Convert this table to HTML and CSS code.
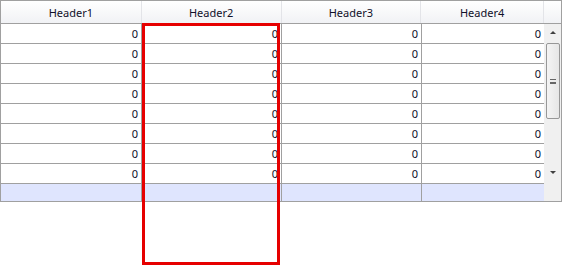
FILE: index.html
```html
<!DOCTYPE html>
<html lang="en">
<head>
    <meta charset="UTF-8">
    <title>DataGridView</title>
    <link rel="stylesheet" href="styles.css">
</head>

<body>
<div class="form">
    <div class="grid">
        <div class="grid-head">
            <div class="hcell c1">Header1</div>
            <div class="hcell c2">Header2</div>
            <div class="hcell c3">Header3</div>
            <div class="hcell c4">Header4</div>
            <div class="hfill"></div>
        </div>
        <div class="grid-body">
            <div class="rows">
                <div class="row"><span class="cell c1">0</span><span class="cell c2">0</span><span class="cell c3">0</span><span class="cell c4">0</span></div>
                <div class="row"><span class="cell c1">0</span><span class="cell c2">0</span><span class="cell c3">0</span><span class="cell c4">0</span></div>
                <div class="row"><span class="cell c1">0</span><span class="cell c2">0</span><span class="cell c3">0</span><span class="cell c4">0</span></div>
                <div class="row"><span class="cell c1">0</span><span class="cell c2">0</span><span class="cell c3">0</span><span class="cell c4">0</span></div>
                <div class="row"><span class="cell c1">0</span><span class="cell c2">0</span><span class="cell c3">0</span><span class="cell c4">0</span></div>
                <div class="row"><span class="cell c1">0</span><span class="cell c2">0</span><span class="cell c3">0</span><span class="cell c4">0</span></div>
                <div class="row"><span class="cell c1">0</span><span class="cell c2">0</span><span class="cell c3">0</span><span class="cell c4">0</span></div>
                <div class="row"><span class="cell c1">0</span><span class="cell c2">0</span><span class="cell c3">0</span><span class="cell c4">0</span></div>
                <div class="row new-row"><span class="cell c1"></span><span class="cell c2"></span><span class="cell c3"></span><span class="cell c4"></span></div>
            </div>
            <div class="vscroll">
                <div class="sb-btn"><span class="arrow up"></span></div>
                <div class="sb-track">
                    <div class="sb-thumb"><span class="grip"></span></div>
                </div>
                <div class="sb-btn"><span class="arrow down"></span></div>
                <div class="sb-corner"></div>
            </div>
        </div>
    </div>
    <!-- marks the selected column -->
    <div class="mark"></div>
</div>
</body>
</html>
```

FILE: styles.css
```css
body{margin: 0; background: #fff; font-family: "Noto Sans", "Liberation Sans", sans-serif; font-size: 11px; color: #0a0a28}

.form{position: relative; width: 562px; height: 267px}
.grid{width: 560px; border: 1px solid #a0a0a0; display: flex; flex-direction: column}

.grid-head{display: flex; height: 22px; border-bottom: 1px solid #a0a0a0; background: linear-gradient(#fff, #f1f2f5)}
.hcell{display: flex; align-items: center; justify-content: center; border-right: 1px solid #e3e4e8; color: #10102a}
.hfill{width: 17px}

.c1{width: 140px}
.c2{width: 139px}
.c3{width: 139px}
.c4{width: 121px}
.hcell.c4{width: 122px}

.grid-body{display: flex}
.rows{width: 543px}
.row{display: flex; height: 19px; border-bottom: 1px solid #a0a0a0}
.cell{display: flex; align-items: center; justify-content: flex-end; padding-right: 3px; box-sizing: border-box; border-right: 1px solid #a0a0a0}
.c1.cell{width: 141px}
.c2.cell{width: 140px}
.c3.cell{width: 140px}
.c4.cell{width: 122px; border-right: none}
.new-row{height: 17px; border-bottom: none; background: #dfe5fe}

.vscroll{width: 17px; display: flex; flex-direction: column; background: #f0f0f0}
.sb-btn{height: 17px; display: flex; align-items: center; justify-content: center}
.arrow{width: 0; height: 0; border-left: 3px solid transparent; border-right: 3px solid transparent}
.arrow.up{border-bottom: 3px solid #404040}
.arrow.down{border-top: 3px solid #404040}
.sb-track{height: 121px; padding: 2px 1px 0 2px}
.sb-thumb{height: 74px; border: 1px solid #979797; border-radius: 2px; background: linear-gradient(90deg, #f4f4f4, #e6e6e6); display: flex; align-items: center; justify-content: center}
.grip{width: 6px; height: 5px; border-top: 1px solid #666; border-bottom: 1px solid #666; background: linear-gradient(transparent 2px, #666 2px, #666 3px, transparent 3px); box-sizing: border-box}
.sb-corner{flex: 1}

.mark{position: absolute; left: 142px; top: 23px; width: 132px; height: 236px; border: 3px solid #e60000}
```
